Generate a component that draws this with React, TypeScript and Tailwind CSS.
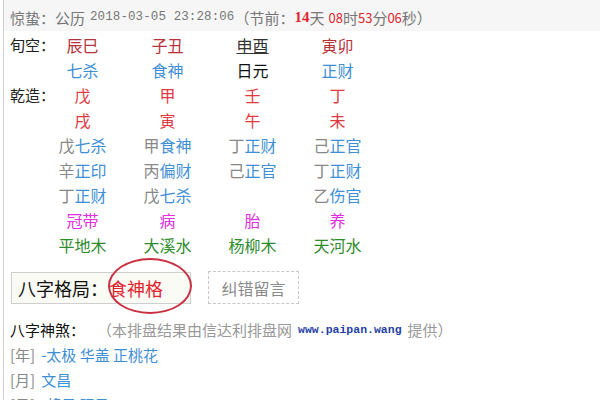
const cols = [
  { xk: "辰巳", xkColor: "text-[#b8323a]", ss: "七杀", ssColor: "text-[#3f8fd6]", gan: "戊", zhi: "戌", cang: [["戊", "七杀"], ["辛", "正印"], ["丁", "正财"]], cs: "冠带", ny: "平地木" },
  { xk: "子丑", xkColor: "text-[#b8323a]", ss: "食神", ssColor: "text-[#3f8fd6]", gan: "甲", zhi: "寅", cang: [["甲", "食神"], ["丙", "偏财"], ["戊", "七杀"]], cs: "病", ny: "大溪水" },
  { xk: "申酉", xkColor: "text-[#333] underline", ss: "日元", ssColor: "text-[#111]", gan: "壬", zhi: "午", cang: [["丁", "正财"], ["己", "正官"]], cs: "胎", ny: "杨柳木" },
  { xk: "寅卯", xkColor: "text-[#b8323a]", ss: "正财", ssColor: "text-[#3f8fd6]", gan: "丁", zhi: "未", cang: [["己", "正官"], ["丁", "正财"], ["乙", "伤官"]], cs: "养", ny: "天河水" },
];

function Row({ label, children }: { label?: string; children: React.ReactNode }) {
  return (
    <div className="grid grid-cols-[30px_repeat(4,85px)] h-[25px] items-center pl-[6px]">
      <span className="whitespace-nowrap text-[15px] text-[#222]">{label}</span>
      {children}
    </div>
  );
}

export default function App() {
  return (
    <div className="w-[600px] h-[400px] overflow-hidden bg-white font-['Noto_Sans_CJK_SC',sans-serif] leading-none">
      <div className="ml-[3px] h-full border-l border-[#cfcfcf]">
        {/* top bar */}
        <div className="h-[31px] bg-[#f6f6f6] overflow-hidden relative">
          <div className="absolute left-[7px] top-[-15px] text-[14px] text-[#999] whitespace-nowrap">
            农历：戊戌年 正月 十八日 子时 &nbsp;&nbsp;&nbsp;&nbsp;&nbsp;&nbsp;&nbsp;&nbsp;&nbsp;&nbsp;&nbsp;&nbsp;&nbsp;&nbsp;&nbsp;&nbsp;（属狗）星期一 双鱼座
          </div>
          <div className="flex items-center h-full pl-[6px] pt-[4px] text-[15px] text-[#777] whitespace-nowrap">
            <span>惊蛰：公历</span>
            <span className="ml-[5px] font-['Liberation_Mono',monospace] text-[12.5px] tracking-[0.1px]">2018-03-05 23:28:06</span>
            <span className="ml-[0px]">（节前：</span>
            <span className="font-['Liberation_Serif',serif] font-bold text-[#e0242f]">14</span>
            <span>天 </span>
            <span className="ml-[4px] text-[#e0242f] text-[13px]">08</span>
            <span>时</span>
            <span className="text-[#e0242f] text-[13px]">53</span>
            <span>分</span>
            <span className="text-[#e0242f] text-[13px]">06</span>
            <span>秒）</span>
          </div>
        </div>

        <div className="pt-[1px]">
          <Row label="旬空：">
            {cols.map((c) => (
              <span key={c.xk} className={`text-center text-[16px] ${c.xkColor}`}>{c.xk}</span>
            ))}
          </Row>
          <Row>
            {cols.map((c) => (
              <span key={c.ss} className={`text-center text-[16px] ${c.ssColor}`}>{c.ss}</span>
            ))}
          </Row>
          <Row label="乾造：">
            {cols.map((c) => (
              <span key={c.gan} className="text-center text-[16px] text-[#e03a42]">{c.gan}</span>
            ))}
          </Row>
          <Row>
            {cols.map((c) => (
              <span key={c.zhi} className="text-center text-[16px] text-[#e03a42]">{c.zhi}</span>
            ))}
          </Row>
          {[0, 1, 2].map((i) => (
            <Row key={i}>
              {cols.map((c, j) => (
                <span key={j} className="text-center text-[16px]">
                  {c.cang[i] && (
                    <>
                      <span className="text-[#888]">{c.cang[i][0]}</span>
                      <span className="text-[#3f8fd6]">{c.cang[i][1]}</span>
                    </>
                  )}
                </span>
              ))}
            </Row>
          ))}
          <Row>
            {cols.map((c) => (
              <span key={c.cs} className="text-center text-[16px] text-[#e02ee0]">{c.cs}</span>
            ))}
          </Row>
          <Row>
            {cols.map((c) => (
              <span key={c.ny} className="text-center text-[16px] text-[#2e8b2e]">{c.ny}</span>
            ))}
          </Row>
        </div>

        {/* 格局 */}
        <div className="flex items-center mt-[14px] pl-[7px] gap-[17px]">
          <div className="relative flex items-center h-[32px] w-[180px] border border-[#cfcfcf] bg-[#fbfbf5] pl-[6px]">
            <span className="text-[18px] text-[#111]">八字格局：</span>
            <span className="text-[18px] text-[#e0242f] ml-[1px]">食神格</span>
            <div className="absolute left-[96px] top-[-15px] w-[84px] h-[56px] rounded-[50%] border-2 border-[#c93040]" />
          </div>
          <div className="flex items-center justify-center h-[33px] w-[91px] border border-dashed border-[#c8c8c8] text-[16px] text-[#8a8a8a]">
            纠错留言
          </div>
        </div>

        {/* 神煞 */}
        <div className="mt-[13px] pl-[6px] h-[25px] flex items-center whitespace-nowrap text-[15px]">
          <span className="text-[#111]">八字神煞：</span>
          <span className="ml-[12px] text-[#999]">（本排盘结果由信达利排盘网</span>
          <span className="ml-[6px] font-['Liberation_Mono',monospace] font-bold text-[11.5px] text-[#1f3fa8]">www.paipan.wang</span>
          <span className="ml-[6px] text-[#999]">提供）</span>
        </div>
        <div className="pl-[6px] h-[25px] flex items-center whitespace-nowrap text-[15px]">
          <span className="text-[#888]">[年]</span>
          <span className="ml-[6px] text-[#3f8fd6]">-太极 华盖 正桃花</span>
        </div>
        <div className="pl-[6px] h-[25px] flex items-center whitespace-nowrap text-[15px]">
          <span className="text-[#888]">[月]</span>
          <span className="ml-[6px] text-[#3f8fd6]">文昌</span>
        </div>
        <div className="pl-[6px] h-[25px] flex items-center whitespace-nowrap text-[15px]">
          <span className="text-[#888]">[日]</span>
          <span className="ml-[6px] text-[#3f8fd6]">-将星 驿马</span>
        </div>
      </div>
    </div>
  );
}
